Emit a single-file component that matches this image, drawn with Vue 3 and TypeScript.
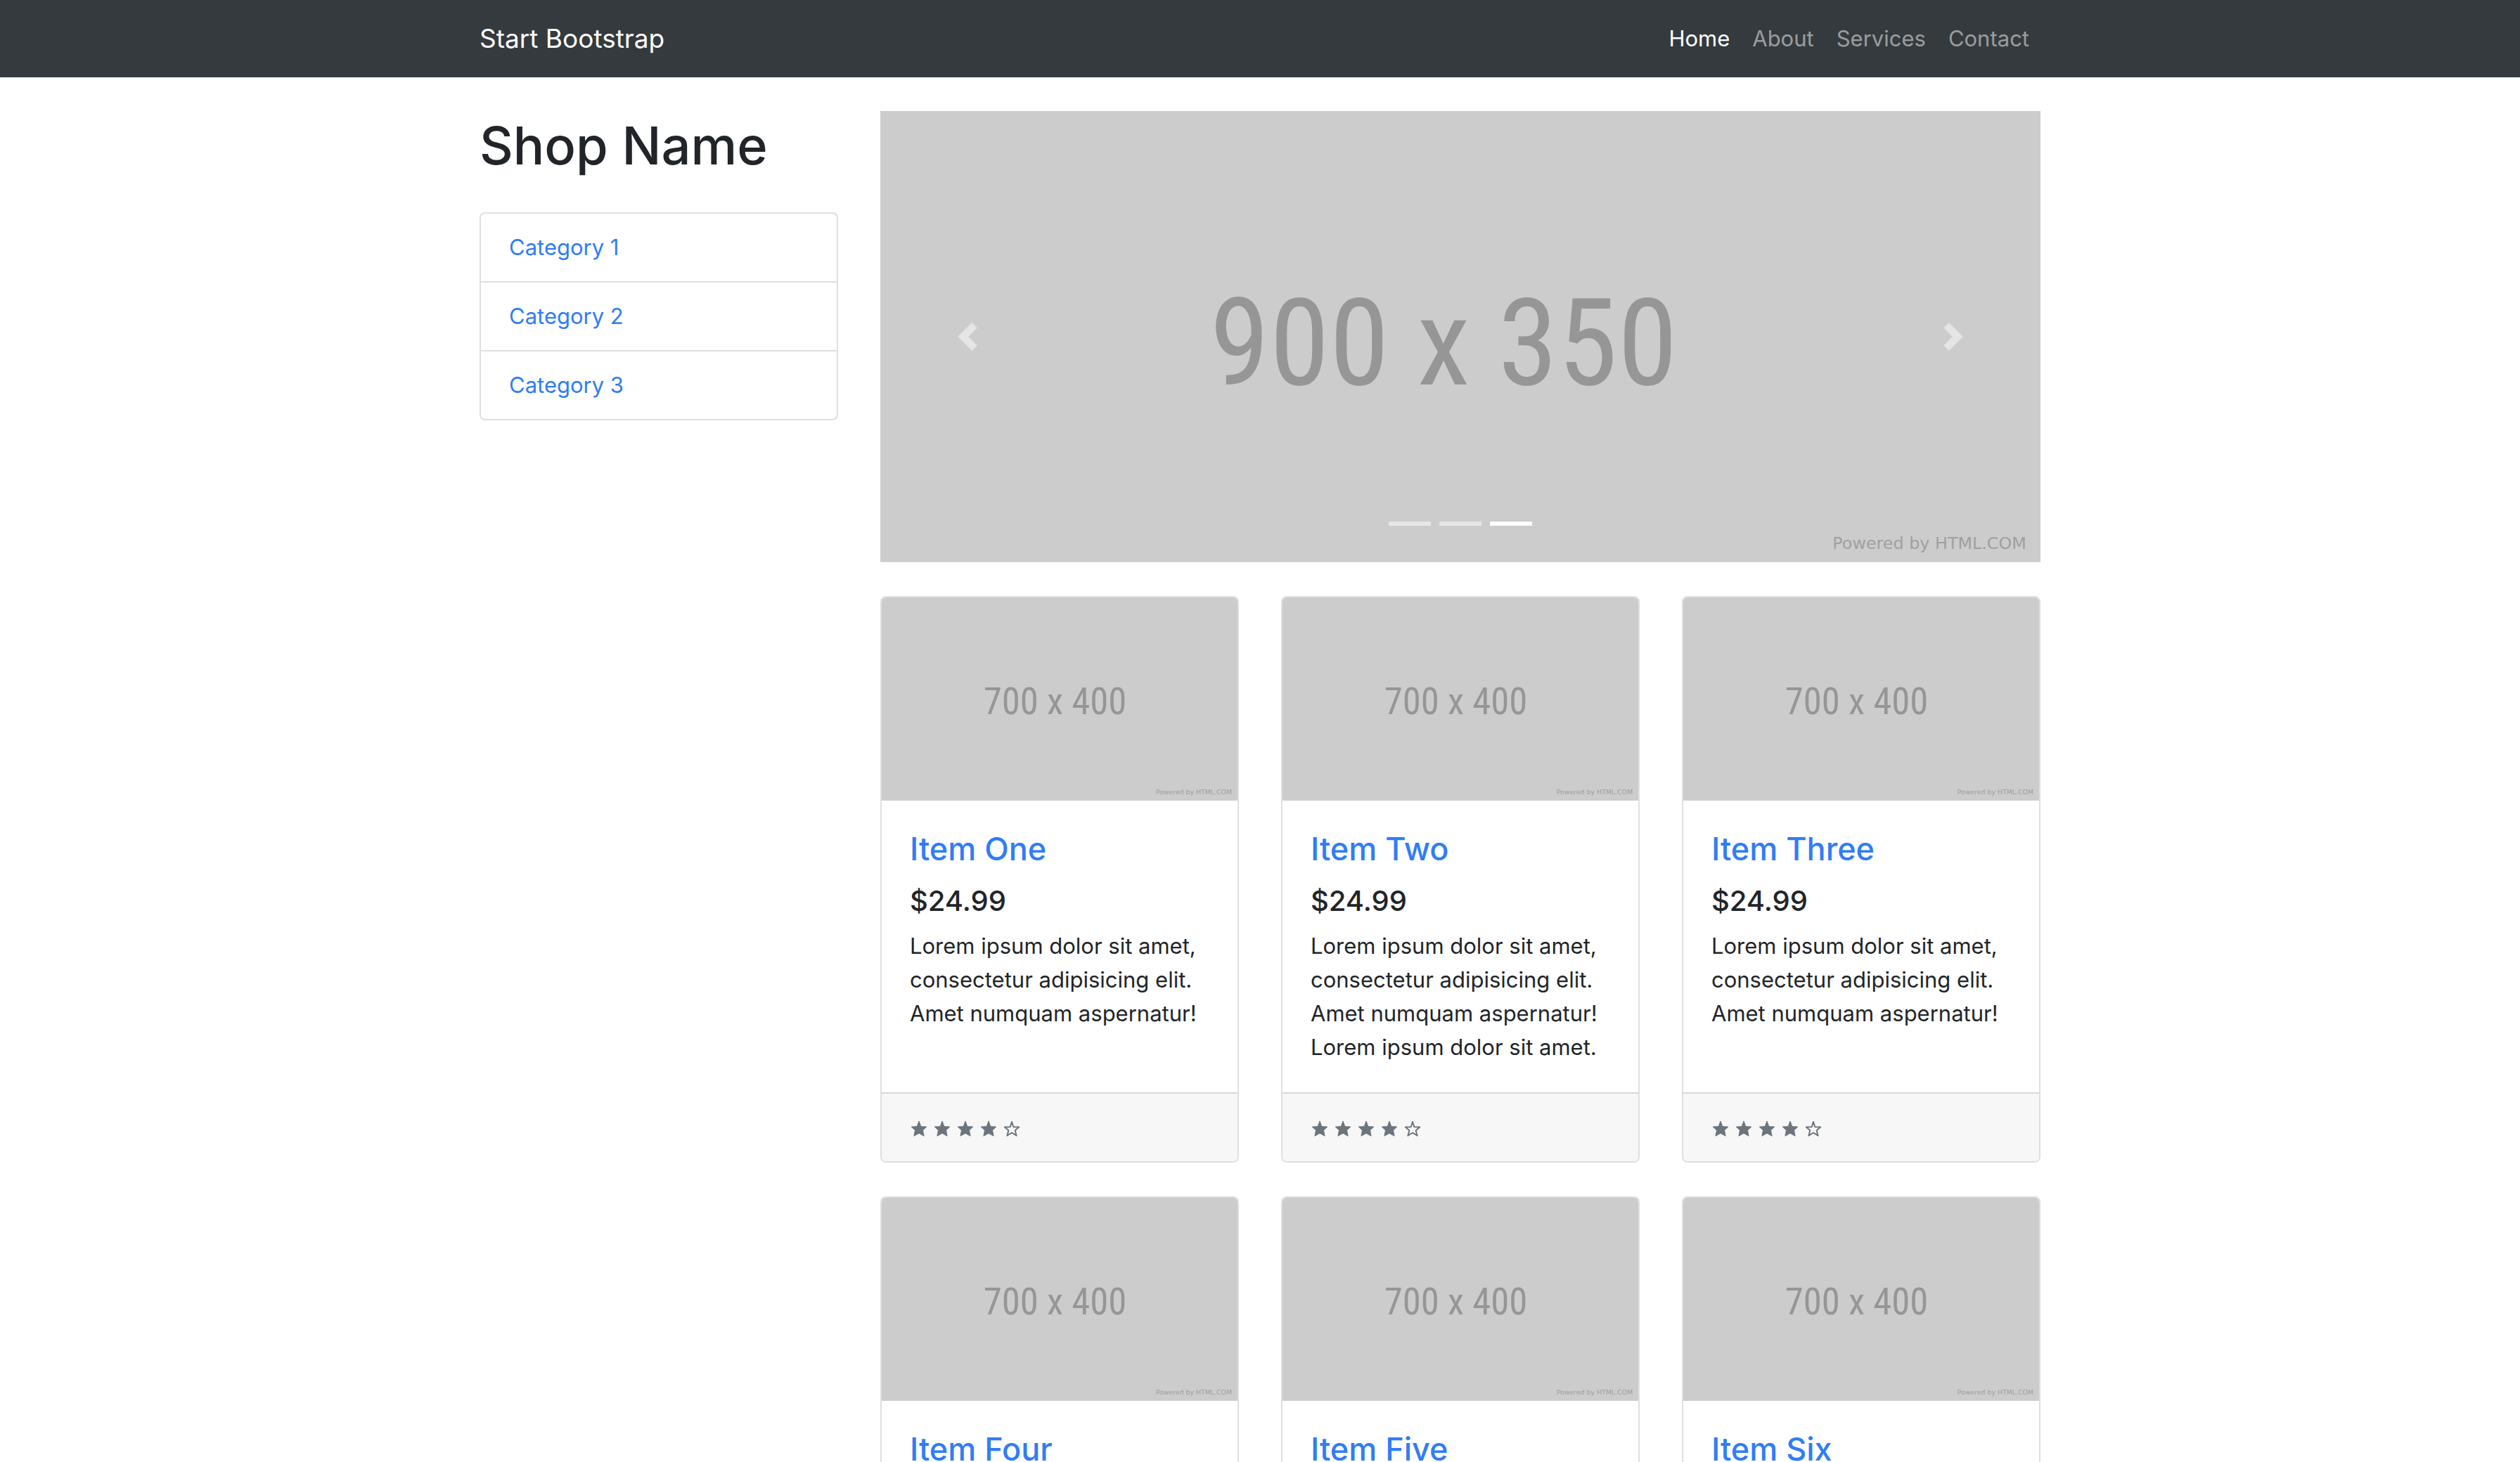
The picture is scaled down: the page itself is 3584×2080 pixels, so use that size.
<script setup lang="ts">
import { ref } from 'vue'

interface Product {
  name: string
  price: string
  text: string
  rating: number
}

const navLinks = ['Home', 'About', 'Services', 'Contact']
const categories = ['Category 1', 'Category 2', 'Category 3']

const shortText = 'Lorem ipsum dolor sit amet, consectetur adipisicing elit. Amet numquam aspernatur!'
const longText = shortText + ' Lorem ipsum dolor sit amet.'

const products: Product[] = [
  { name: 'Item One', price: '$24.99', text: shortText, rating: 4 },
  { name: 'Item Two', price: '$24.99', text: longText, rating: 4 },
  { name: 'Item Three', price: '$24.99', text: shortText, rating: 4 },
  { name: 'Item Four', price: '$24.99', text: shortText, rating: 4 },
  { name: 'Item Five', price: '$24.99', text: longText, rating: 4 },
  { name: 'Item Six', price: '$24.99', text: shortText, rating: 4 },
]

const slideCount = 3
const slide = ref(2)

function step(by: number) {
  slide.value = (slide.value + by + slideCount) % slideCount
}
</script>

<template>
  <div class="page">
    <header class="navbar">
      <div class="container navbar-inner">
        <a class="brand" href="#">Start Bootstrap</a>
        <nav class="nav" aria-label="Main">
          <a
            v-for="(link, i) in navLinks"
            :key="link"
            href="#"
            class="nav-link"
            :class="{ active: i === 0 }"
          >{{ link }}</a>
        </nav>
      </div>
    </header>

    <div class="container layout">
      <aside class="sidebar">
        <h1 class="shop-name">Shop Name</h1>
        <nav class="list-group" aria-label="Categories">
          <a v-for="category in categories" :key="category" href="#" class="list-item">{{ category }}</a>
        </nav>
      </aside>

      <main class="content">
        <section class="carousel" aria-label="Featured">
          <svg class="placeholder" viewBox="0 0 900 350" role="img" aria-label="Slide">
            <rect width="900" height="350" fill="#ccc" />
            <text class="size-label" x="437" y="212" font-size="94">900 x 350</text>
            <text class="credit" x="889" y="340" font-size="13">Powered by HTML.COM</text>
          </svg>
          <button class="control prev" type="button" aria-label="Previous" @click="step(-1)">
            <svg viewBox="0 0 8 8"><path d="M5.25 0l-4 4 4 4 1.5-1.5L4.25 4l2.5-2.5L5.25 0z" /></svg>
          </button>
          <button class="control next" type="button" aria-label="Next" @click="step(1)">
            <svg viewBox="0 0 8 8"><path d="M2.75 0l-1.5 1.5L3.75 4l-2.5 2.5L2.75 8l4-4-4-4z" /></svg>
          </button>
          <div class="indicators">
            <button
              v-for="n in slideCount"
              :key="n"
              type="button"
              class="indicator"
              :class="{ active: n - 1 === slide }"
              :aria-label="'Slide ' + n"
              @click="slide = n - 1"
            ></button>
          </div>
        </section>

        <section class="cards">
          <article v-for="product in products" :key="product.name" class="card">
            <a href="#" class="card-image" :aria-label="product.name">
              <svg class="placeholder" viewBox="0 0 700 400" aria-hidden="true">
                <rect width="700" height="400" fill="#ccc" />
                <text class="size-label" x="341" y="229" font-size="73">700 x 400</text>
                <text class="credit" x="689" y="388" font-size="13">Powered by HTML.COM</text>
              </svg>
            </a>
            <div class="card-body">
              <h4 class="card-title"><a href="#">{{ product.name }}</a></h4>
              <h5 class="card-price">{{ product.price }}</h5>
              <p class="card-text">{{ product.text }}</p>
            </div>
            <footer class="card-footer">
              <div class="stars" role="img" :aria-label="product.rating + ' out of 5 stars'">
                <svg
                  v-for="n in 5"
                  :key="n"
                  class="star"
                  :class="{ hollow: n > product.rating }"
                  viewBox="0 0 26 26"
                >
                  <path
                    v-if="n <= product.rating"
                    d="M13 4l2.8 7.7 8 .4-5.3 4.9 1.6 8.2L13 21.3 5.900 25.200l1.600-8.200L2.200 12.100l8-.4z"
                  />
                  <path v-else d="M13 5l2.300 7.300 7.900.3-5.500 4.600 1.900 7.500L13 20.500l-6.600 4.200 1.900-7.500-5.500-4.600 7.900-.3z" />
                </svg>
              </div>
            </footer>
          </article>
        </section>
      </main>
    </div>
  </div>
</template>

<style>
body {
  margin: 0;
  background: #fff;
}
</style>

<style scoped>
.page {
  font-family: Inter, 'Liberation Sans', sans-serif;
  font-size: 31px;
  line-height: 48px;
  color: #212529;
}

.page *,
.page *::before {
  box-sizing: border-box;
}

a {
  color: #307df6;
  text-decoration: none;
}

button {
  border: 0;
  padding: 0;
  background: none;
  cursor: pointer;
}

.container {
  width: 100%;
  max-width: 2280px;
  margin: 0 auto;
  padding: 0 30px;
}

.navbar {
  background: #353a3e;
}

.navbar-inner {
  display: flex;
  align-items: center;
  justify-content: space-between;
  min-height: 110px;
}

.brand {
  color: #fff;
  font-size: 37px;
}

.nav {
  display: flex;
}

.nav-link {
  padding: 16px;
  color: rgba(255, 255, 255, 0.5);
}

.nav-link.active {
  color: #fff;
}

.layout {
  display: grid;
  grid-template-columns: repeat(4, minmax(0, 1fr));
  gap: 60px;
  align-items: start;
  padding-top: 48px;
  padding-bottom: 48px;
}

.shop-name {
  margin: 0 0 46px;
  font-size: 74px;
  font-weight: 500;
  line-height: 98px;
}

.list-group {
  display: flex;
  flex-direction: column;
  border: 2px solid #dfdfdf;
  border-radius: 8px;
}

.list-item {
  padding: 24px 36px 24px 40px;
}

.list-item + .list-item {
  border-top: 2px solid #dfdfdf;
}

.content {
  grid-column: span 3;
}

.placeholder {
  display: block;
  width: 100%;
  height: auto;
}

.size-label {
  font-family: 'Roboto Condensed', Roboto, sans-serif;
  fill: #969696;
  text-anchor: middle;
}

.credit {
  font-family: 'DejaVu Sans', sans-serif;
  fill: #a0a0a0;
  text-anchor: end;
}

.carousel {
  position: relative;
  margin-bottom: 48px;
}

.control {
  position: absolute;
  top: 0;
  bottom: 0;
  display: flex;
  align-items: center;
  justify-content: center;
  width: 15%;
  opacity: 0.5;
}

.control svg {
  width: 40px;
  height: 40px;
  fill: #fff;
}

.prev {
  left: 0;
}

.next {
  right: 0;
}

.indicators {
  position: absolute;
  left: 0;
  right: 0;
  bottom: 52px;
  display: flex;
  justify-content: center;
  gap: 12px;
}

.indicator {
  width: 60px;
  height: 6px;
  background: rgba(255, 255, 255, 0.5);
}

.indicator.active {
  background: #fff;
}

.cards {
  display: grid;
  grid-template-columns: repeat(3, minmax(0, 1fr));
  gap: 48px 60px;
}

.card {
  display: flex;
  flex-direction: column;
  overflow: hidden;
  border: 2px solid #dfdfdf;
  border-radius: 8px;
}

.card-body {
  flex: 1;
  padding: 40px;
}

.card-title {
  margin: 0 0 20px;
  font-size: 45px;
  font-weight: 500;
  line-height: 58px;
}

.card-price {
  margin: 0 0 16px;
  font-size: 40px;
  font-weight: 500;
  line-height: 49px;
}

.card-text {
  margin: 0;
}

.card-footer {
  padding: 24px 40px;
  border-top: 2px solid #d8d8d8;
  background: #f7f7f7;
}

.stars {
  display: flex;
  align-items: center;
  gap: 7px;
  height: 48px;
}

.star {
  width: 26px;
  height: 26px;
  overflow: visible;
  fill: #6c757d;
  stroke: #6c757d;
  stroke-width: 1;
  stroke-linejoin: round;
}

.star.hollow {
  fill: none;
  stroke-width: 2;
}
</style>
